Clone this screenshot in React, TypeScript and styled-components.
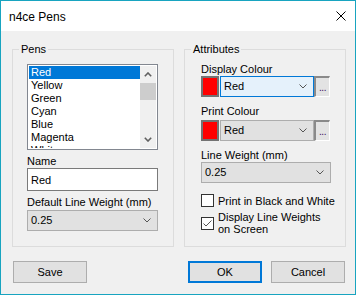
import React from "react";
import styled, { createGlobalStyle, css } from "styled-components";

const GlobalStyle = createGlobalStyle`
  html, body { margin: 0; padding: 0; background: #ffffff; }
  body {
    font-family: "Liberation Sans", Arial, sans-serif;
    font-size: 11px;
    color: #000;
  }
  * { box-sizing: border-box; }
`;

const Window = styled.div`
  width: 356px;
  height: 295px;
  border: 1px solid #18a4c0;
  background: #f0f0f0;
  display: flex;
  flex-direction: column;
`;

const TitleBar = styled.div`
  height: 30px;
  background: #ffffff;
  display: flex;
  align-items: center;
  justify-content: space-between;
  padding: 0 9px 0 8px;
`;

const TitleText = styled.span`
  font-size: 12px;
  line-height: 14px;
  padding-top: 1px;
`;

const CloseIcon = styled.svg`
  width: 10px;
  height: 10px;
  margin-right: 0;
`;

const Body = styled.div`
  flex: 1;
  display: flex;
  flex-direction: column;
  padding: 18px 9px 0 11px;
`;

const Groups = styled.div`
  display: grid;
  grid-template-columns: 162px 162px;
  column-gap: 10px;
`;

const GroupBox = styled.div<{ $pl: number; $pt: number }>`
  position: relative;
  height: 198px;
  border: 1px solid #dcdcdc;
  display: flex;
  flex-direction: column;
  align-items: flex-start;
  padding: ${(p) => p.$pt}px 0 0 ${(p) => p.$pl}px;
`;

const Legend = styled.span`
  position: absolute;
  top: -7px;
  left: 6px;
  padding: 0 2px;
  background: #f0f0f0;
  line-height: 13px;
`;

const FieldLabel = styled.div<{ $mt?: number; $mb?: number }>`
  line-height: 13px;
  margin-top: ${(p) => p.$mt ?? 0}px;
  margin-bottom: ${(p) => p.$mb ?? 0}px;
  white-space: nowrap;
`;

const ListBox = styled.div`
  width: 131px;
  height: 86px;
  border: 1px solid #828790;
  background: #ffffff;
  padding: 1px;
  display: flex;
`;

const ListItems = styled.div`
  flex: 1;
  overflow: hidden;
`;

const ListItem = styled.div<{ $selected?: boolean }>`
  height: 13px;
  line-height: 13px;
  padding-left: 2px;
  white-space: nowrap;
  ${(p) =>
    p.$selected &&
    css`
      background: #0078d7;
      color: #ffffff;
    `}
`;

const ScrollBar = styled.div`
  width: 16px;
  background: #f0f0f0;
  display: flex;
  flex-direction: column;
`;

const ScrollArrow = styled.div`
  height: 17px;
  display: flex;
  align-items: center;
  justify-content: center;
`;

const ScrollThumb = styled.div`
  height: 17px;
  margin-top: 0px;
  background: #cdcdcd;
`;

const ScrollSpacer = styled.div`
  flex: 1;
`;

const TextInput = styled.input`
  width: 131px;
  height: 23px;
  border: 1px solid #7a7a7a;
  background: #ffffff;
  padding: 0 0 0 3px;
  margin: 0;
  font-family: inherit;
  font-size: 11px;
  color: #000;
  outline: none;
`;

const Combo = styled.div<{ $w: number; $focused?: boolean }>`
  width: ${(p) => p.$w}px;
  height: 21px;
  border: 1px solid ${(p) => (p.$focused ? "#0078d7" : "#adadad")};
  background: ${(p) => (p.$focused ? "#e5f1fb" : "#e1e1e1")};
  display: flex;
  align-items: center;
  justify-content: space-between;
  padding: 0 6px 0 3px;
  line-height: 13px;
`;

const ColorRow = styled.div<{ $mt?: number }>`
  display: flex;
  align-items: flex-start;
  margin-top: ${(p) => p.$mt ?? 0}px;
`;

const Swatch = styled.div<{ $color: string }>`
  width: 18px;
  height: 21px;
  border: 2px solid #737373;
  background: ${(p) => p.$color};
  margin-right: 1px;
`;

const EllipsisButton = styled.div`
  width: 16px;
  height: 21px;
  border-top: 2px solid #8a8a8a;
  border-left: 2px solid #8a8a8a;
  border-right: 1px solid #ffffff;
  border-bottom: 1px solid #ffffff;
  background: #e3e3e3;
  display: flex;
  align-items: flex-end;
  justify-content: center;
  font-size: 10px;
  line-height: 10px;
  color: #3a1060;
  letter-spacing: -0.5px;
  padding-bottom: 3px;
`;

const CheckRow = styled.div<{ $mt?: number }>`
  display: flex;
  align-items: center;
  gap: 4px;
  margin-top: ${(p) => p.$mt ?? 0}px;
`;

const CheckBox = styled.div`
  width: 13px;
  height: 13px;
  border: 1px solid #333333;
  background: #ffffff;
  display: flex;
  align-items: center;
  justify-content: center;
`;

const CheckLabel = styled.div`
  line-height: 12px;
`;

const ButtonRow = styled.div`
  display: flex;
  align-items: center;
  margin: 14px 1px 0 1px;
`;

const RowSpacer = styled.div`
  flex: 1;
`;

const DialogButton = styled.button<{ $primary?: boolean }>`
  width: 74px;
  height: 22px;
  margin: 0;
  padding: 0;
  font-family: inherit;
  font-size: 11px;
  color: #000;
  background: #e1e1e1;
  border: ${(p) => (p.$primary ? "2px solid #0078d7" : "1px solid #adadad")};
  & + & {
    margin-left: 9px;
  }
`;

const ChevronDown = () => (
  <svg width="8" height="5" viewBox="0 0 8 5">
    <polyline points="0.5,0.5 4,4 7.5,0.5" fill="none" stroke="#555" strokeWidth="1" />
  </svg>
);

const ScrollChevron = ({ up }: { up?: boolean }) => (
  <svg width="8" height="5" viewBox="0 0 8 5">
    <polyline
      points={up ? "0.8,4.2 4,1 7.2,4.2" : "0.8,0.8 4,4 7.2,0.8"}
      fill="none"
      stroke="#606060"
      strokeWidth="1.6"
    />
  </svg>
);

const pens = ["Red", "Yellow", "Green", "Cyan", "Blue", "Magenta", "White"];

export default function App() {
  return (
    <>
      <GlobalStyle />
      <Window>
        <TitleBar>
          <TitleText>n4ce Pens</TitleText>
          <CloseIcon viewBox="0 0 10 10">
            <path d="M0.5 0.5 L9.5 9.5 M9.5 0.5 L0.5 9.5" stroke="#000" strokeWidth="1" />
          </CloseIcon>
        </TitleBar>
        <Body>
          <Groups>
            <GroupBox $pl={14} $pt={14}>
              <Legend>Pens</Legend>
              <ListBox>
                <ListItems>
                  {pens.map((p, i) => (
                    <ListItem key={p} $selected={i === 0}>
                      {p}
                    </ListItem>
                  ))}
                </ListItems>
                <ScrollBar>
                  <ScrollArrow>
                    <ScrollChevron up />
                  </ScrollArrow>
                  <ScrollThumb />
                  <ScrollSpacer />
                  <ScrollArrow>
                    <ScrollChevron />
                  </ScrollArrow>
                </ScrollBar>
              </ListBox>
              <FieldLabel $mt={5}>Name</FieldLabel>
              <TextInput readOnly defaultValue="Red" />
              <FieldLabel $mt={5} $mb={1}>
                Default Line Weight (mm)
              </FieldLabel>
              <Combo $w={131}>
                <span>0.25</span>
                <ChevronDown />
              </Combo>
            </GroupBox>
            <GroupBox $pl={16} $pt={13}>
              <Legend>Attributes</Legend>
              <FieldLabel>Display Colour</FieldLabel>
              <ColorRow>
                <Swatch $color="#ff0000" />
                <Combo $w={94} $focused>
                  <span>Red</span>
                  <ChevronDown />
                </Combo>
                <EllipsisButton>...</EllipsisButton>
              </ColorRow>
              <FieldLabel $mt={8} $mb={2}>
                Print Colour
              </FieldLabel>
              <ColorRow>
                <Swatch $color="#ff0000" />
                <Combo $w={94}>
                  <span>Red</span>
                  <ChevronDown />
                </Combo>
                <EllipsisButton>...</EllipsisButton>
              </ColorRow>
              <FieldLabel $mt={8}>Line Weight (mm)</FieldLabel>
              <Combo $w={130}>
                <span>0.25</span>
                <ChevronDown />
              </Combo>
              <CheckRow $mt={11}>
                <CheckBox />
                <CheckLabel>Print in Black and White</CheckLabel>
              </CheckRow>
              <CheckRow $mt={4}>
                <CheckBox>
                  <svg width="11" height="11" viewBox="0 0 11 11">
                    <polyline points="1.5,5.5 4,8 9.5,2.5" fill="none" stroke="#555" strokeWidth="1" />
                  </svg>
                </CheckBox>
                <CheckLabel>
                  Display Line Weights
                  <br />
                  on Screen
                </CheckLabel>
              </CheckRow>
            </GroupBox>
          </Groups>
          <ButtonRow>
            <DialogButton>Save</DialogButton>
            <RowSpacer />
            <DialogButton $primary>OK</DialogButton>
            <DialogButton>Cancel</DialogButton>
          </ButtonRow>
        </Body>
      </Window>
    </>
  );
}
